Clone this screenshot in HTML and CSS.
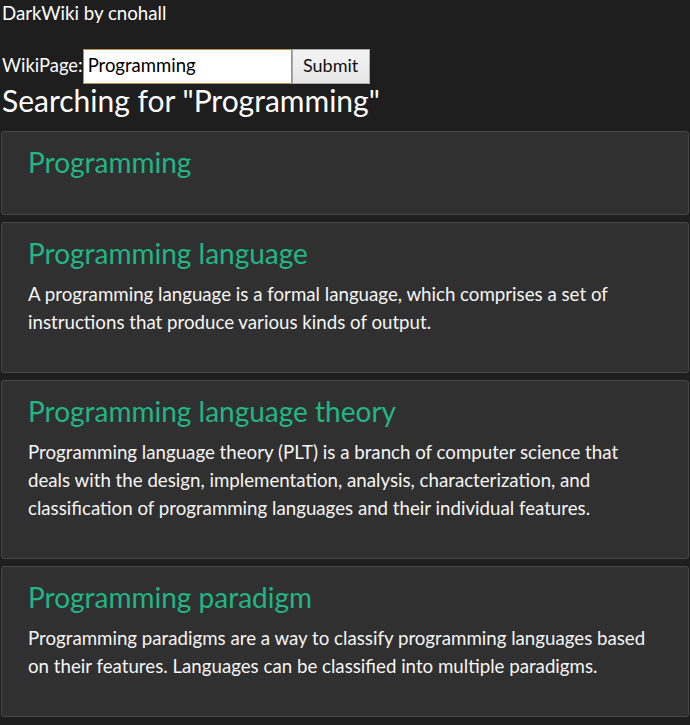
FILE: index.html
```html
<!DOCTYPE html>
<html>
<head>
<meta charset="utf-8">
<link rel="stylesheet" href="styles.css">
</head>
<body>
<div class="brand">DarkWiki by cnohall</div>
<form class="search">
  <label class="label">WikiPage:</label><input class="field" type="text" value="Programming"><button class="submit" type="button">Submit</button>
</form>
<h1 class="heading">Searching for "Programming"</h1>
<div class="results">
  <div class="card">
    <h2 class="title">Programming</h2>
  </div>
  <div class="card">
    <h2 class="title">Programming language</h2>
    <p class="desc">A programming language is a formal language, which comprises a set of instructions that produce various kinds of output.</p>
  </div>
  <div class="card">
    <h2 class="title">Programming language theory</h2>
    <p class="desc">Programming language theory (PLT) is a branch of computer science that deals with the design, implementation, analysis, characterization, and classification of programming languages and their individual features.</p>
  </div>
  <div class="card">
    <h2 class="title">Programming paradigm</h2>
    <p class="desc">Programming paradigms are a way to classify programming languages based on their features. Languages can be classified into multiple paradigms.</p>
  </div>
</div>
</body>
</html>
```
FILE: styles.css
```css
html, body {
  margin: 0;
  padding: 0;
  background: #1e1e1e;
}
body {
  font-family: Lato, "Noto Sans", sans-serif;
  color: #ffffff;
  overflow: hidden;
}
.brand {
  font-size: 18.7px;
  line-height: 22px;
  padding: 2px 0 0 2px;
}
.search {
  display: flex;
  align-items: center;
  margin: 25px 0 0 2px;
  height: 35px;
}
.label {
  font-size: 18.4px;
  line-height: 22px;
  margin-bottom: 3px;
}
.field {
  box-sizing: border-box;
  width: 209px;
  height: 35px;
  margin: 0;
  padding: 0 0 3px 4px;
  border: 1.5px solid #b88d45;
  background: #ffffff;
  font-family: Lato, sans-serif;
  font-size: 18.5px;
  color: #000;
  outline: none;
}
.submit {
  box-sizing: border-box;
  width: 78px;
  height: 35px;
  margin: 0;
  border: 1px solid #a9a9a9;
  background: linear-gradient(#f4f4f4, #e6e6e6);
  font-family: Lato, sans-serif;
  font-size: 18px;
  color: #111;
  padding: 0 0 3px;
}
.heading {
  margin: 0 0 0 2px;
  padding-top: 1px;
  font-size: 30px;
  line-height: 30px;
  font-weight: normal;
}
.results {
  margin-top: 16px;
  padding: 0 1px;
}
.card {
  background: #303030;
  border: 1px solid #474747;
  border-radius: 3px;
  padding: 13px 36px 25px 26px;
  margin-bottom: 7px;
}
.title {
  margin: 0 0 10px;
  font-size: 28px;
  line-height: 34px;
  font-weight: normal;
  color: #22b585;
}
.desc {
  margin: 0 0 11px;
  font-size: 18.7px;
  line-height: 28px;
  color: #f5f5f5;
}
```
